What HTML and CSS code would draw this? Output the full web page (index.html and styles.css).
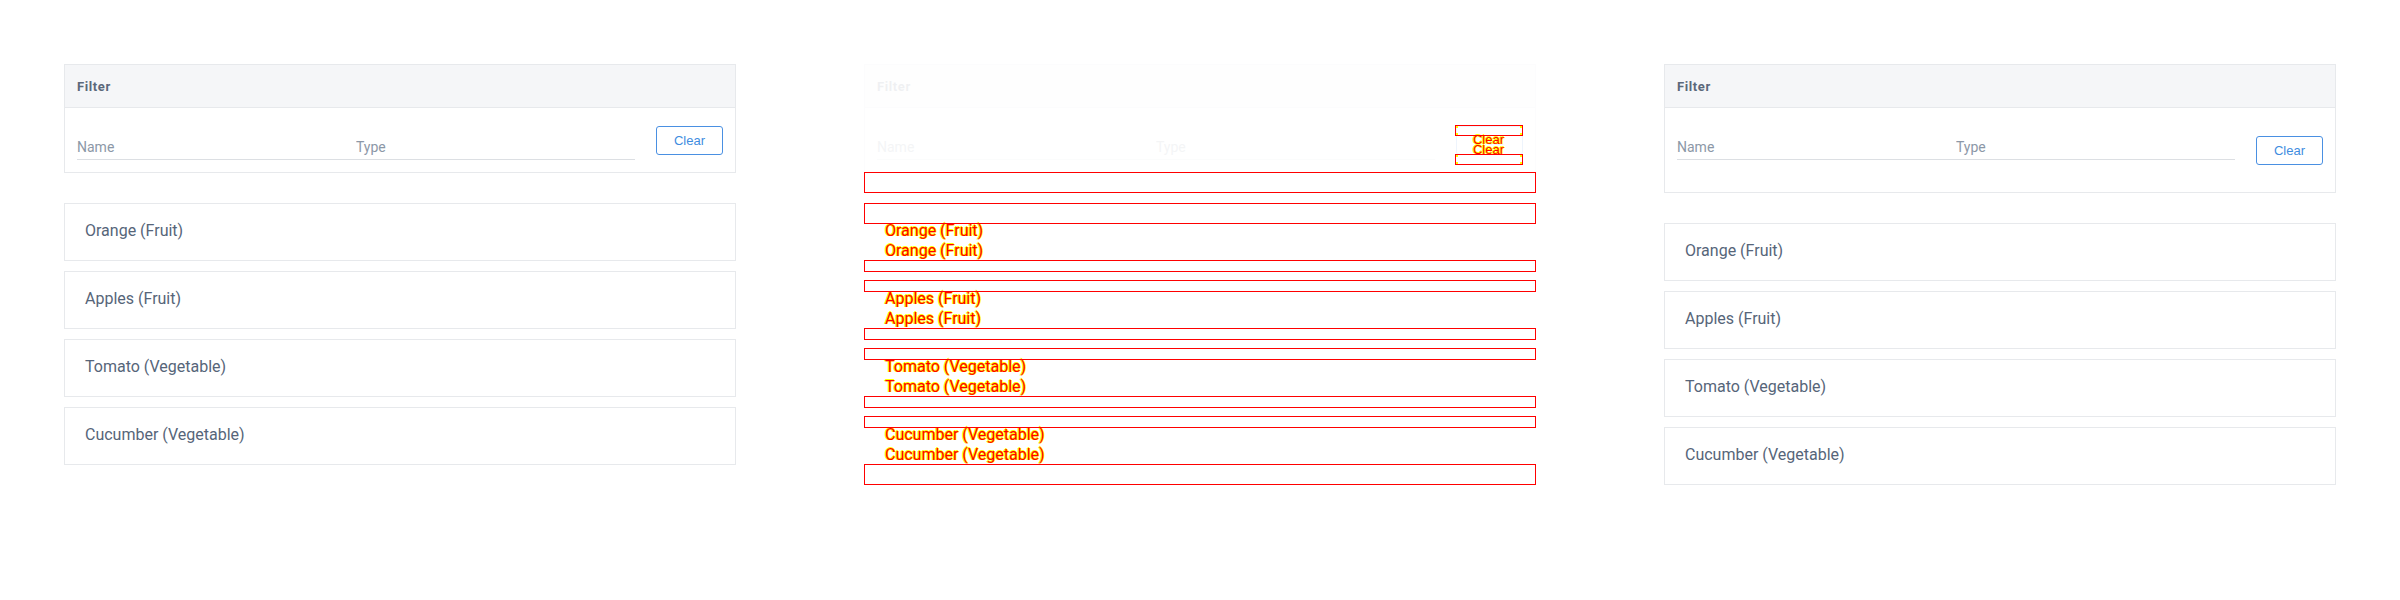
FILE: index.html
```html
<!DOCTYPE html>
<html lang="en">
<head>
<meta charset="utf-8">
<title>Filter diff</title>
<link rel="stylesheet" href="styles.css">
</head>
<body>
<div class="page">
  <section class="col">
    <div class="panel">
      <div class="panel-head">Filter</div>
      <div class="panel-body">
        <div class="fields">
          <div class="inputs">
            <input class="field" placeholder="Name">
            <input class="field" placeholder="Type">
          </div>
        </div>
        <button class="btn">Clear</button>
      </div>
    </div>
    <ul class="list">
      <li class="card">Orange (Fruit)</li>
      <li class="card">Apples (Fruit)</li>
      <li class="card">Tomato (Vegetable)</li>
      <li class="card">Cucumber (Vegetable)</li>
    </ul>
  </section>

  <section class="col diff">
    <div class="panel ghost">
      <div class="panel-head">Filter</div>
      <div class="panel-body">
        <div class="fields">
          <div class="inputs">
            <input class="field" placeholder="Name">
            <input class="field" placeholder="Type">
          </div>
        </div>
        <button class="btn">Clear</button>
      </div>
    </div>

    <div class="dbtn dbtn-before">Clear</div>
    <div class="dbtn dbtn-after">Clear</div>
    <div class="dbox dbox-btn" style="top:61px"></div>
    <div class="dbox dbox-btn" style="top:90px"></div>

    <ul class="list dlist dlist-before">
      <li class="card">Orange (Fruit)</li>
      <li class="card">Apples (Fruit)</li>
      <li class="card">Tomato (Vegetable)</li>
      <li class="card">Cucumber (Vegetable)</li>
    </ul>
    <ul class="list dlist dlist-after">
      <li class="card">Orange (Fruit)</li>
      <li class="card">Apples (Fruit)</li>
      <li class="card">Tomato (Vegetable)</li>
      <li class="card">Cucumber (Vegetable)</li>
    </ul>

    <div class="dbox" style="top:108px;height:21px"></div>
    <div class="dbox" style="top:139px;height:21px"></div>
    <div class="dbox" style="top:196px;height:12px"></div>
    <div class="dbox" style="top:216px;height:12px"></div>
    <div class="dbox" style="top:264px;height:12px"></div>
    <div class="dbox" style="top:284px;height:12px"></div>
    <div class="dbox" style="top:332px;height:12px"></div>
    <div class="dbox" style="top:352px;height:12px"></div>
    <div class="dbox" style="top:400px;height:21px"></div>
  </section>

  <section class="col">
    <div class="panel">
      <div class="panel-head">Filter</div>
      <div class="panel-body">
        <div class="fields">
          <div class="inputs">
            <input class="field" placeholder="Name">
            <input class="field" placeholder="Type">
          </div>
          <div class="hint"></div>
        </div>
        <button class="btn">Clear</button>
      </div>
    </div>
    <ul class="list">
      <li class="card">Orange (Fruit)</li>
      <li class="card">Apples (Fruit)</li>
      <li class="card">Tomato (Vegetable)</li>
      <li class="card">Cucumber (Vegetable)</li>
    </ul>
  </section>
</div>
</body>
</html>
```

FILE: styles.css
```css
* { box-sizing: border-box; }
html, body { margin: 0; padding: 0; background: #fff; }
body { font-family: Roboto, "Liberation Sans", Arial, sans-serif; color: #566579; }

.page {
  display: flex;
  gap: 128px;
  padding: 64px;
  height: 600px;
}
.col { width: 672px; flex: none; }

.panel {
  border: 1px solid #e7e9ec;
  background: #fff;
}
.panel-head {
  height: 43px;
  background: #f5f6f8;
  border-bottom: 1px solid #e7e9ec;
  display: flex;
  align-items: center;
  padding: 0 12px;
  font-size: 13px;
  font-weight: 700;
  letter-spacing: 0.6px;
  color: #5b687a;
}
.panel-body {
  display: flex;
  align-items: center;
  gap: 21px;
  padding: 12px;
}
.fields { flex: 1; }
.inputs {
  display: grid;
  grid-template-columns: 1fr 1fr;
}
.field {
  display: block;
  width: 100%;
  height: 40px;
  margin: 0;
  border: 0;
  border-bottom: 1px solid #dcdfe3;
  border-radius: 0;
  padding: 14px 0 0;
  background: transparent;
  font-family: Roboto, "Liberation Sans", Arial, sans-serif;
  font-size: 14px;
  color: #566579;
  outline: none;
}
.field::placeholder { color: #8c98a7; opacity: 1; }
.hint { height: 20px; }

.btn {
  flex: none;
  width: 67px;
  height: 29px;
  border: 1px solid #4a90e2;
  border-radius: 3px;
  background: #fff;
  color: #3f8de0;
  font-family: "Liberation Sans", Arial, sans-serif;
  font-size: 13px;
  padding: 0;
  margin: 0;
}

.list { list-style: none; margin: 30px 0 0; padding: 0; }
.card {
  height: 58px;
  border: 1px solid #e7e9ec;
  margin-bottom: 10px;
  padding: 0 20px 4px;
  display: flex;
  align-items: center;
  font-size: 16px;
  color: #566579;
}

/* diff column */
.diff { position: relative; }
.ghost { opacity: 0.09; }

.dbox {
  position: absolute;
  left: 0;
  width: 672px;
  border: 1px solid #ff0000;
}
.dbox-btn {
  left: 591px;
  width: 68px;
  height: 11px;
  background:
    linear-gradient(#ffff00, #ffff00) left top / 2px 2px no-repeat,
    linear-gradient(#ffff00, #ffff00) right top / 2px 2px no-repeat,
    linear-gradient(#ffff00, #ffff00) left bottom / 2px 2px no-repeat,
    linear-gradient(#ffff00, #ffff00) right bottom / 2px 2px no-repeat;
}

.dlist { position: absolute; left: 0; width: 672px; margin: 0; }
.dlist-before { top: 139px; }
.dlist-after { top: 159px; }
.dlist .card,
.dbtn {
  border-color: transparent;
  color: #ff0000;
  text-shadow: 1px 0 #ffff00, -1px 0 #ffff00, 0 -1px #ffff00;
}
.dbtn {
  position: absolute;
  left: 591px;
  width: 67px;
  height: 29px;
  border: 1px solid transparent;
  display: flex;
  align-items: center;
  justify-content: center;
  font-family: "Liberation Sans", Arial, sans-serif;
  font-size: 13px;
}
.dbtn-before { top: 61px; }
.dbtn-after { top: 71px; }
```
